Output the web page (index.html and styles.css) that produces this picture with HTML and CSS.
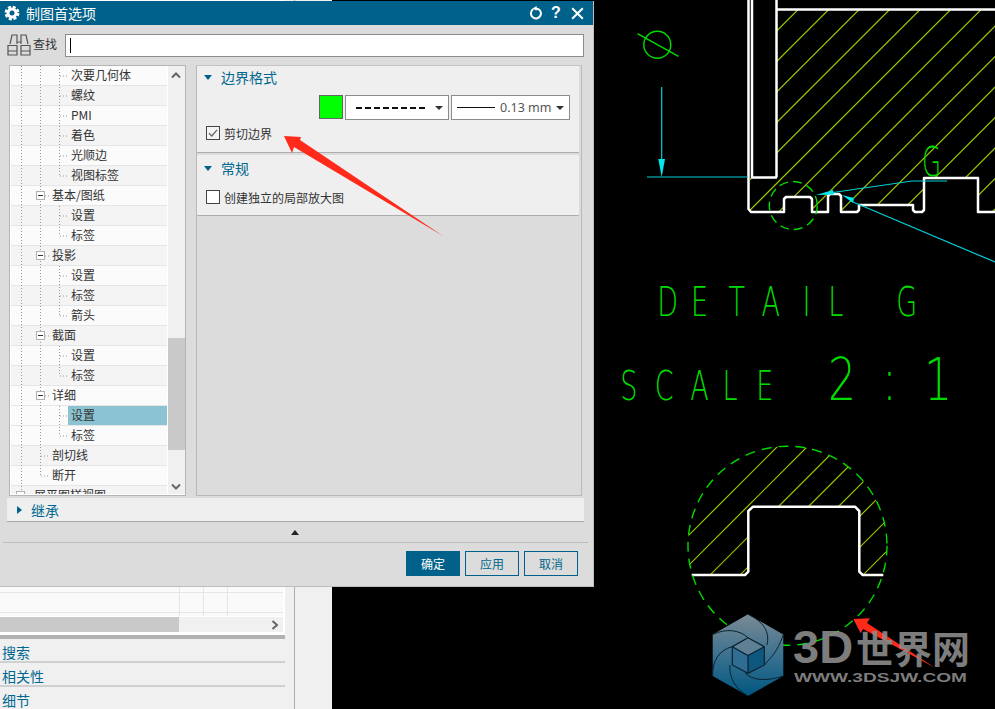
FILE: index.html
```html
<!DOCTYPE html>
<html lang="zh-CN">
<head>
<meta charset="utf-8">
<title>制图首选项</title>
<link rel="stylesheet" href="styles.css">
</head>
<body>
<div class="desktop">

  <svg class="cad" width="995" height="709" viewBox="0 0 995 709">
    <defs>
      <clipPath id="partClip">
        <polygon points="777,10 995,10 995,212 978,212 978,178 924,178 924,212 913,212 913,205 859,205 859,212 841,212 841,194 828,194 828,212 812,212 812,197 784,197 784,212 750,212 750,178 777,178"/>
      </clipPath>
      <clipPath id="detailClip"><circle cx="787.5" cy="545.7" r="99.5"/></clipPath>
    </defs>

    <path class="hatch" clip-path="url(#partClip)" d="M807.7 0L557.7 250M838.2 0L588.2 250M868.7 0L618.7 250M899.2 0L649.2 250M929.7 0L679.7 250M960.2 0L710.2 250M990.7 0L740.7 250M1021.2 0L771.2 250M1051.7 0L801.7 250M1082.2 0L832.2 250M1112.7 0L862.7 250M1143.2 0L893.2 250M1173.7 0L923.7 250M1204.2 0L954.2 250"/>

    <path class="steel" d="M748.5 0V209L751 212H784V199L786 197H810L812 199V212H828V196L830 194H839L841 196V212H857L859 210V205H913V210L915 212H922L924 210V178H978V212H995"/>
    <path class="steel" d="M752 0V177.5H777M776.5 0V177.5M777 9.5H995"/>

    <circle class="sym" cx="657.3" cy="44.7" r="13.5"/>
    <path class="sym" d="M637.5 33.7L678.5 56.3"/>

    <path class="dim" d="M661.7 87V170M647 177H748"/>
    <polygon class="dimfill" points="661.7,177 658.3,159 665,159"/>
    <path class="dim" d="M833 192.5L912 181H947M853 202L995 262"/>
    <polygon class="dimfill" points="816,195 833,190 834,194.5"/>
    <polygon class="dimfill" points="842,195 854,198 853,203"/>

    <circle class="dash" cx="793.3" cy="205.5" r="24"/>

    <text class="cadtext" transform="translate(922 176) scale(.6 1)">G</text>
    <text class="cadtext" transform="translate(656 316) scale(.66 1)" x="2 53 110 160 222 261 320 364">DETAIL G</text>
    <text class="cadtext" transform="translate(619 400) scale(.66 1)" x="2 54 108 157 208">SCALE</text>
    <text class="cadtext big" transform="translate(828 400) scale(.75 1)" x="0 72 128">2:1</text>

    <path class="hatch" clip-path="url(#detailClip)" d="M1224 0L524 700M1254 0L554 700M1285 0L585 700M1315 0L615 700M1345 0L645 700M1376 0L676 700M1407 0L707 700M1438 0L738 700"/>
    <rect class="mask" x="680" y="575" width="215" height="80"/>
    <rect class="mask" x="748" y="507" width="111" height="68"/>
    <path class="steel" d="M691.7 575H745L748.3 571.7V511L753 506.7H855L859.3 511V571.7L862.7 575H883.3"/>
    <circle class="dash wide" cx="787.5" cy="545.7" r="99.5"/>
  </svg>

  <aside class="backpanel">
    <div class="backmain">
      <div class="table">
        <div class="trow"><i></i><i></i><i></i><i></i></div>
        <div class="trow"><i></i><i></i><i></i><i></i></div>
        <div class="trow stub"><i></i><i></i><i></i><i></i></div>
      </div>
      <div class="hscroll">
        <div class="hthumb"></div>
        <svg class="hchev" width="8" height="10" viewBox="0 0 8 10"><path d="M1.5 1L6 5L1.5 9"/></svg>
      </div>
      <div class="band"></div>
      <div class="backsec">搜索</div>
      <div class="backsec">相关性</div>
      <div class="backsec last">细节</div>
    </div>
    <div class="backside"></div>
  </aside>

  <section class="dialog">
    <header class="titlebar">
      <svg class="gear" width="16" height="16" viewBox="0 0 16 16">
        <circle class="gear-ring" cx="8" cy="8" r="4"/>
        <circle class="gear-teeth" cx="8" cy="8" r="6.2"/>
      </svg>
      <span class="title">制图首选项</span>
      <svg class="tool reset" width="14" height="14" viewBox="0 0 14 14"><path d="M4.2 3.2A5 5 0 1 0 7 2.4"/><path class="tip" d="M7.6 0L3.6 2.6L7.6 4.8Z"/></svg>
      <span class="help">?</span>
      <svg class="tool close" width="13" height="13" viewBox="0 0 13 13"><path d="M1.2 1.2L11.8 11.8M11.8 1.2L1.2 11.8"/></svg>
    </header>

    <div class="searchrow">
      <svg class="binoc" width="26" height="24" viewBox="0 0 26 24">
        <path d="M4 11L6 2H11V11M2 12.5H11V22H2ZM15 11V2H20L22 11M15 12.5H24V22H15ZM11 9H15M2 18H11M15 18H24"/>
      </svg>
      <label class="searchlabel">查找</label>
      <div class="searchbox"><span class="caret"></span></div>
    </div>

    <div class="mainrow">
      <div class="tree">
        <div class="rows">
          <div class="row lv2"><span class="label">次要几何体</span></div>
          <div class="row lv2"><span class="label">螺纹</span></div>
          <div class="row lv2"><span class="label">PMI</span></div>
          <div class="row lv2"><span class="label">着色</span></div>
          <div class="row lv2"><span class="label">光顺边</span></div>
          <div class="row lv2"><span class="label">视图标签</span></div>
          <div class="row lv1"><span class="box minus"></span><span class="label">基本/图纸</span></div>
          <div class="row lv2"><span class="label">设置</span></div>
          <div class="row lv2"><span class="label">标签</span></div>
          <div class="row lv1"><span class="box minus"></span><span class="label">投影</span></div>
          <div class="row lv2"><span class="label">设置</span></div>
          <div class="row lv2"><span class="label">标签</span></div>
          <div class="row lv2"><span class="label">箭头</span></div>
          <div class="row lv1"><span class="box minus"></span><span class="label">截面</span></div>
          <div class="row lv2"><span class="label">设置</span></div>
          <div class="row lv2"><span class="label">标签</span></div>
          <div class="row lv1"><span class="box minus"></span><span class="label">详细</span></div>
          <div class="row lv2 selected"><span class="label">设置</span></div>
          <div class="row lv2"><span class="label">标签</span></div>
          <div class="row lv1 leaf"><span class="label">剖切线</span></div>
          <div class="row lv1 leaf"><span class="label">断开</span></div>
          <div class="row lv0"><span class="box"></span><span class="label">展平图样视图</span></div>
          <svg class="guides" width="157" height="428" viewBox="10 66 157 428">
            <path d="M20.5 66V494M39.5 66V476M58.5 66V176M58.5 206V236M58.5 266V316M58.5 346V376M58.5 406V436"/>
            <path d="M59 76H67M59 96H67M59 116H67M59 136H67M59 156H67M59 176H67M59 216H67M59 236H67M59 276H67M59 296H67M59 316H67M59 356H67M59 376H67M59 416H67M59 436H67M44 196H49M44 256H49M44 336H49M44 396H49M40 456H48M40 476H48"/>
          </svg>
        </div>
        <div class="vscroll">
          <div class="vthumb"></div>
          <svg class="chev up" width="10" height="7" viewBox="0 0 10 7"><path d="M1 5.5L5 1.5L9 5.5"/></svg>
          <svg class="chev down" width="10" height="7" viewBox="0 0 10 7"><path d="M1 1.5L5 5.5L9 1.5"/></svg>
        </div>
      </div>

      <div class="prefs">
        <section class="group first">
          <h3 class="grouphead"><span class="tri-down"></span>边界格式</h3>
          <div class="styles">
            <span class="swatch"></span>
            <div class="combo dashcombo"><span class="dashline"></span><span class="tri-small"></span></div>
            <div class="combo widthcombo"><span class="solidline"></span><span class="comboval">0.13 mm</span><span class="tri-small"></span></div>
          </div>
          <label class="check">
            <svg class="checkbox" width="14" height="14" viewBox="0 0 14 14"><rect x=".5" y=".5" width="13" height="13"/><path d="M3 7.2L5.8 10L11 3.8"/></svg>
            剪切边界
          </label>
        </section>
        <section class="group second">
          <h3 class="grouphead"><span class="tri-down"></span>常规</h3>
          <label class="check">
            <svg class="checkbox" width="14" height="14" viewBox="0 0 14 14"><rect x=".5" y=".5" width="13" height="13"/></svg>
            创建独立的局部放大图
          </label>
        </section>
      </div>
    </div>

    <div class="inherit"><span class="tri-right"></span>继承</div>
    <div class="collapse"><span class="tri-up"></span></div>
    <footer class="actions">
      <button class="btn primary">确定</button>
      <button class="btn">应用</button>
      <button class="btn">取消</button>
    </footer>
  </section>

  <svg class="overlay" width="995" height="709" viewBox="0 0 995 709">
    <defs>
      <linearGradient id="hexGrad" x1="0" y1="0" x2="0" y2="1">
        <stop offset="0" stop-color="#7b8a94"/>
        <stop offset=".55" stop-color="#356f8f"/>
        <stop offset="1" stop-color="#00567f"/>
      </linearGradient>
    </defs>
    <polygon class="redarrow" points="284,136 301,137 300,140 443,236 294,147 292,153"/>
    <polygon class="redarrow" points="853.3,619 870,618.3 867,623 935,667.7 863,629 860.7,633.3"/>

    <polygon fill="url(#hexGrad)" points="748,614.3 783.3,634.5 783.3,676 748,696 712.7,676 712.7,634.5"/>
    <path class="blades" d="M748 614.3C764 622 770 632 767 645M783.3 634.5C777 654 768 660 764.5 665M783.3 676C765 682 752 680 745 673M748 696C734 688 729 676 730 665M712.7 676C712 660 720 650 732 646.7M712.7 634.5C726 628 740 630 748 637.7"/>
    <polygon class="cubetop" points="748,637.7 764.3,646.7 748,655.5 732.3,646.7"/>
    <polygon class="cubeleft" points="732.3,646.7 748,655.5 748,673.3 732.3,665"/>
    <polygon class="cuberight" points="764.3,646.7 748,655.5 748,673.3 764.3,665"/>
    <path class="cubeline" d="M748 637.7L764.3 646.7V665L748 673.3L732.3 665V646.7ZM732.3 646.7L748 655.5L764.3 646.7M748 655.5V673.3"/>

    <text class="wm-main" x="793" y="663">3D<tspan class="wm-cjk" dx="3">世界网</tspan></text>
    <text class="wm-url" x="794" y="682" textLength="173" lengthAdjust="spacingAndGlyphs">WWW.3DSJW.COM</text>
  </svg>
</div>
</body>
</html>
```

FILE: styles.css
```css
* { box-sizing: border-box; }

html, body {
  margin: 0;
  height: 100%;
  background: #000;
  overflow: hidden;
}

body {
  font-family: "Noto Sans CJK SC", "Noto Sans", sans-serif;
  font-size: 12px;
  color: #333;
}

.desktop {
  position: relative;
  width: 995px;
  height: 709px;
  overflow: hidden;
  background: #000;
}

/* CAD drawing */
.cad, .overlay {
  position: absolute;
  left: 0;
  top: 0;
}
.overlay { pointer-events: none; }

.hatch { fill: none; stroke: #98c800; stroke-width: 1.2; }
.steel { fill: none; stroke: #fff; stroke-width: 2.5; stroke-linejoin: round; }
.mask { fill: #000; }
.sym { fill: none; stroke: #00dc00; stroke-width: 1.4; }
.dim { fill: none; stroke: #00cfd6; stroke-width: 1.2; }
.dimfill { fill: #00e8f0; }
.dash { fill: none; stroke: #00dc00; stroke-width: 1.4; stroke-dasharray: 9 5; }
.dash.wide { stroke-dasharray: 10 7; }

.cadtext {
  font-family: "DejaVu Sans", sans-serif;
  font-weight: 200;
  font-size: 41px;
  fill: #00dc00;
}
.cadtext.big { font-size: 59px; }

/* annotation and watermark */
.redarrow { fill: #ff2a1a; }
.blades { fill: none; stroke: #0a2230; stroke-width: 1; }
.cubetop { fill: #5f8094; }
.cubeleft { fill: #2f6d92; }
.cuberight { fill: #0e5880; }
.cubeline { fill: none; stroke: #0a2230; stroke-width: 1.2; }

.wm-main {
  font-family: "Liberation Sans", sans-serif;
  font-weight: 700;
  font-size: 47px;
  fill: #8a8a8a;
  fill-opacity: .92;
}
.wm-cjk {
  font-family: "Noto Sans CJK SC", sans-serif;
  font-size: 38px;
}
.wm-url {
  font-family: "Liberation Sans", sans-serif;
  font-weight: 700;
  font-size: 12.5px;
  fill: #7c7c7c;
}

/* window behind the dialog */
.backpanel {
  position: absolute;
  left: 0;
  top: 0;
  width: 332px;
  height: 709px;
  display: flex;
  background: #f0f0f0;
}
.backmain {
  width: 285px;
  height: 100%;
  display: flex;
  flex-direction: column;
}
.backside {
  width: 10px;
  border-right: 1px solid #b0b0b0;
}
.table {
  flex: 1;
  display: flex;
  flex-direction: column;
  justify-content: flex-end;
  overflow: hidden;
  background: #fff;
  padding-right: 2px;
}
.trow {
  display: grid;
  grid-template-columns: 180px 24px 24px 1fr;
  height: 20px;
  flex: none;
  background: #fafafa;
  border-bottom: 1px solid #e6e6e6;
}
.trow.stub { height: 3px; border-bottom: 0; }
.trow i { border-right: 1px solid #e6e6e6; }
.trow i:last-child { border-right: 0; }
.hscroll {
  position: relative;
  height: 19px;
  flex: none;
  background: #fff;
  padding: 1px 2px 3px 0;
}
.hscroll::before {
  content: "";
  display: block;
  height: 100%;
  background: #f0f0f0;
}
.hthumb {
  position: absolute;
  left: 0;
  top: 1px;
  width: 179px;
  height: 15px;
  background: #c9c9c9;
}
.hchev {
  position: absolute;
  left: 271px;
  top: 4px;
}
.hchev path { fill: none; stroke: #666; stroke-width: 2; }
.band {
  height: 4px;
  flex: none;
  background: #b2b2b2;
}
.backsec {
  height: 24px;
  flex: none;
  padding: 2px 0 0 2px;
  font-size: 14px;
  line-height: 22px;
  color: #00688f;
  border-bottom: 2px solid #d0d0d0;
}
.backsec.last { height: 22px; border-bottom: 0; }

/* dialog */
.dialog {
  position: absolute;
  left: 0;
  top: 1px;
  width: 594px;
  height: 586px;
  display: flex;
  flex-direction: column;
  background: #dcdcdc;
  border-right: 1px solid #bdbdbd;
  border-bottom: 1px solid #bdbdbd;
}

.titlebar {
  height: 24px;
  flex: none;
  display: flex;
  align-items: center;
  background: #00618a;
  color: #fff;
  padding-left: 4px;
}
.gear { flex: none; }
.gear-ring { fill: none; stroke: #fff; stroke-width: 3; }
.gear-teeth { fill: none; stroke: #fff; stroke-width: 2.4; stroke-dasharray: 3 1.87; }
.title {
  margin-left: 6px;
  font-size: 14px;
  flex: 1;
}
.tool { flex: none; }
.tool path { fill: none; stroke: #fff; stroke-width: 2; }
.tool .tip { fill: #fff; stroke: none; }
.help {
  margin-left: 8px;
  width: 10px;
  font-family: "Liberation Sans", sans-serif;
  font-weight: 700;
  font-size: 16px;
  text-align: center;
}
.close { margin: 0 9px 0 10px; }

.searchrow {
  height: 40px;
  flex: none;
  display: flex;
  align-items: center;
  padding: 0 9px 0 6px;
}
.binoc { flex: none; }
.binoc path { fill: none; stroke: #555; stroke-width: 1.2; }
.searchlabel { margin-left: 1px; width: 32px; line-height: 16px; padding-bottom: 2px; }
.searchbox {
  flex: 1;
  height: 23px;
  background: #fff;
  border: 1px solid #8c8c8c;
  padding: 3px 0 3px 4px;
}
.caret {
  display: block;
  width: 1px;
  height: 15px;
  background: #000;
}

.mainrow {
  height: 431px;
  flex: none;
  display: flex;
  gap: 10px;
  padding-left: 9px;
}

.tree {
  width: 177px;
  height: 100%;
  flex: none;
  display: flex;
  background: #fff;
  border: 1px solid #b5b5b5;
  padding: 0 1px 1px 1px;
}
.rows {
  position: relative;
  width: 156px;
  height: 428px;
  flex: none;
  overflow: hidden;
}
.row {
  height: 20px;
  display: flex;
  align-items: center;
  border-bottom: 1px solid #e6e6e6;
  background: #fbfbfb;
}
.row:nth-child(even) { background: #f4f4f4; }
.label { line-height: 17px; padding-bottom: 2px; }
.lv2 { padding-left: 57px; }
.lv2 .label { padding-left: 3px; }
.lv1 { padding-left: 25px; }
.lv1 .label { margin-left: 7px; }
.lv1.leaf { padding-left: 41px; }
.lv1.leaf .label { margin-left: 0; }
.lv0 { padding-left: 5px; }
.lv0 .label { margin-left: 9px; }
.row.selected { background: #fbfbfb; }
.row.selected .label {
  flex: 1;
  height: 19px;
  background: #8cc3d3;
}
.box {
  position: relative;
  width: 9px;
  height: 9px;
  flex: none;
  background: #fff;
  border: 1px solid #b0b0b0;
  z-index: 1;
}
.box.minus::after {
  content: "";
  position: absolute;
  left: 1px;
  top: 3px;
  width: 5px;
  height: 1px;
  background: #333;
}
.guides {
  position: absolute;
  left: 0;
  top: 0;
}
.guides path { fill: none; stroke: #9a9a9a; stroke-width: 1; stroke-dasharray: 1 2; }

.vscroll {
  position: relative;
  width: 17px;
  margin-left: 1px;
  flex: none;
  background: #f0f0f0;
}
.vthumb {
  margin-top: 272px;
  height: 112px;
  background: #c9c9c9;
}
.chev {
  position: absolute;
  left: 3px;
}
.chev.up { top: 6px; }
.chev.down { bottom: 4px; }
.chev path { fill: none; stroke: #666; stroke-width: 2; }

.prefs {
  width: 386px;
  height: 431px;
  flex: none;
  background: #dcdcdc;
  border: 1px solid #b9b9b9;
  border-top-color: #c4c4c4;
  padding-right: 1px;
}
.group {
  background: #efefef;
  border-bottom: 1px solid #aeaeae;
  margin-right: 1px;
}
.group.first { height: 87px; margin-bottom: 2px; }
.group.second { height: 61px; }
.grouphead {
  margin: 0;
  height: 24px;
  display: flex;
  align-items: center;
  font-size: 14px;
  font-weight: 400;
  color: #00688f;
  padding-left: 7px;
}
.first .grouphead { padding-bottom: 2px; }
.second .grouphead { padding-top: 2px; }
.tri-down {
  width: 0;
  height: 0;
  border-left: 4.5px solid transparent;
  border-right: 4.5px solid transparent;
  border-top: 5px solid #00618a;
  margin-right: 9px;
}
.styles {
  display: flex;
  align-items: flex-start;
  gap: 2px;
  height: 34px;
  padding: 5px 0 0 122px;
}
.swatch {
  width: 24px;
  height: 24px;
  background: #00ff00;
  border: 1px solid #666;
}
.combo {
  height: 25px;
  display: flex;
  align-items: center;
  background: #fff;
  border: 1px solid #8c8c8c;
}
.dashcombo { width: 104px; padding-left: 10px; }
.widthcombo { width: 119px; padding-left: 5px; }
.dashline {
  width: 70px;
  height: 2px;
  background: repeating-linear-gradient(90deg, #111 0 6px, transparent 6px 9px);
}
.solidline {
  width: 38px;
  border-top: 1px solid #111;
}
.comboval {
  margin-left: 5px;
  width: 54px;
  font-family: "Noto Sans", sans-serif;
  font-size: 12.5px;
  color: #555;
}
.tri-small {
  width: 0;
  height: 0;
  border-left: 4px solid transparent;
  border-right: 4px solid transparent;
  border-top: 4.5px solid #333;
  margin-left: auto;
  margin-right: 5px;
}
.check {
  display: flex;
  align-items: center;
  gap: 4px;
  padding-left: 9px;
  height: 18px;
}
.second .check { margin-top: 9px; }
.checkbox { flex: none; }
.checkbox rect { fill: #fff; stroke: #444; stroke-width: 1; }
.first .checkbox rect { fill: #f4f4f4; }
.checkbox path { fill: none; stroke: #666; stroke-width: 1.3; }

.inherit {
  height: 24px;
  flex: none;
  margin: 2px 9px 0 7px;
  display: flex;
  align-items: center;
  font-size: 14px;
  color: #00688f;
  background: #efefef;
  border-bottom: 1px solid #a8a8a8;
  padding-left: 10px;
}
.tri-right {
  width: 0;
  height: 0;
  border-top: 4.5px solid transparent;
  border-bottom: 4.5px solid transparent;
  border-left: 5px solid #00618a;
  margin-right: 9px;
}
.collapse {
  height: 21px;
  flex: none;
  display: flex;
  justify-content: center;
  align-items: center;
  margin: 0 5px 0 3px;
  border-bottom: 1px solid #bcbcbc;
  padding-right: 2px;
}
.tri-up {
  width: 0;
  height: 0;
  border-left: 4.5px solid transparent;
  border-right: 4.5px solid transparent;
  border-bottom: 5px solid #222;
}
.actions {
  flex: 1;
  display: flex;
  justify-content: flex-end;
  gap: 5px;
  padding: 8px 15px 0 0;
}
.btn {
  width: 54px;
  height: 25px;
  padding: 0;
  font-family: inherit;
  font-size: 12px;
  color: #00688f;
  background: #dcdcdc;
  border: 1.5px solid #00618a;
  border-radius: 0;
}
.btn.primary {
  background: #00618a;
  color: #fff;
}
```
